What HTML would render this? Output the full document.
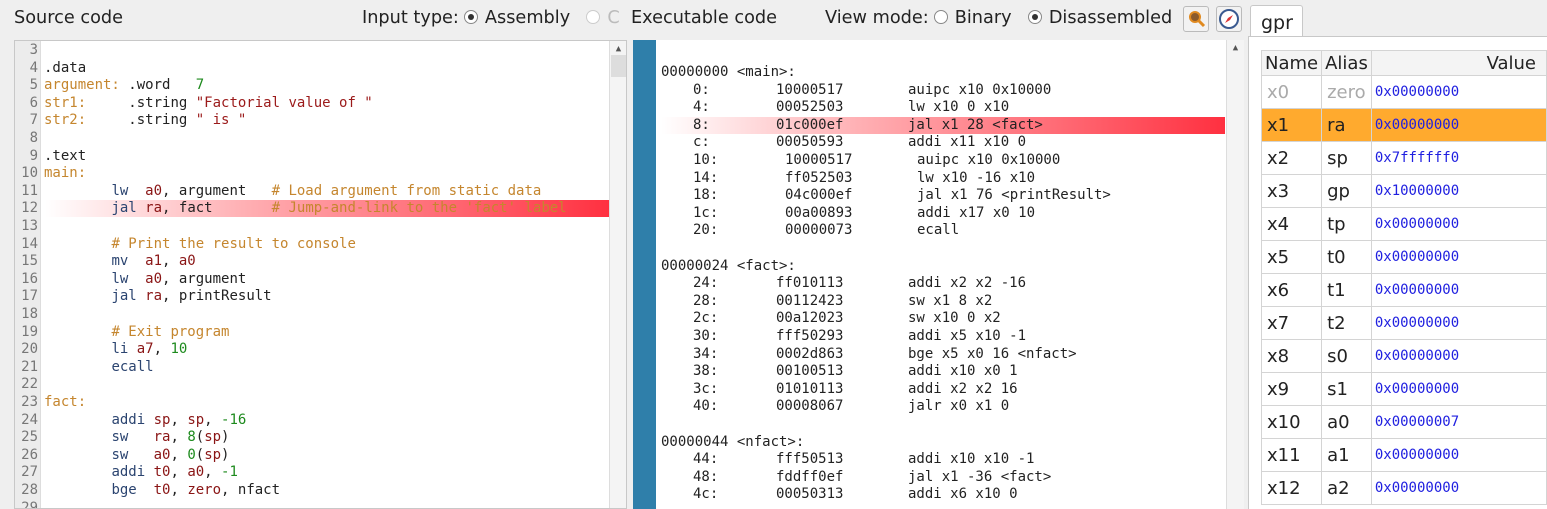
<!DOCTYPE html>
<html><head><meta charset="utf-8"><style>
*{margin:0;padding:0;box-sizing:border-box}
body{width:1547px;height:509px;overflow:hidden;background:#efefef;font-family:"DejaVu Sans","Liberation Sans",sans-serif;position:relative;color:#222}
.ui{position:absolute;font-size:17.7px;top:8px;white-space:nowrap}
.rad{display:inline-block;width:14px;height:14px;border:1px solid #888;border-radius:50%;background:#fff;vertical-align:-1px;position:relative;margin:0 7px 0 5px}
.rad.on::after{content:"";position:absolute;left:3px;top:3px;width:6px;height:6px;border-radius:50%;background:#333}
.mono{font-family:"DejaVu Sans Mono","Liberation Mono",monospace;font-size:14px}
#src{position:absolute;left:14px;top:40px;width:613px;height:469px;background:#fff;border:1px solid #c8c8c8;overflow:hidden}
#gut{position:absolute;left:0;top:0;width:26px;height:100%;background:#ececec;border-right:1px solid #ddd}
.ln{position:absolute;height:17.6px;line-height:17.6px;white-space:pre}
.num{left:0;width:23px;text-align:right;color:#777}
.code{left:29px}
.sb{position:absolute;background:#f4f4f4;border-left:1px solid #ddd}
.hl{position:absolute;height:17px;background:linear-gradient(90deg,rgba(255,255,255,0),#ffb0b4 35%,#ff3040)}
.m{color:#2b4470}.r{color:#8a1515}.n{color:#1d8a1d}.l{color:#c5862e}.s{color:#9b1a1a}
#dis{position:absolute;left:656px;top:40px;width:588px;height:469px;background:#fff;overflow:hidden}
#gpr{position:absolute;left:1248px;top:36px;width:299px;height:473px;background:#fff;border-left:1px solid #c8c8c8;border-top:1px solid #c8c8c8}
table{position:absolute;left:12px;top:13px;border-collapse:collapse;font-size:18px;table-layout:fixed}
td{border:1px solid #d4d4d4;height:33px;padding:0 5px;white-space:nowrap;overflow:hidden}
th{font-weight:normal;text-align:left;padding:0 3px;height:25px;border:1px solid #d4d4d4;background:#f4f4f4;white-space:nowrap;overflow:hidden}
td.v{font-family:"DejaVu Sans Mono",monospace;font-size:14px;color:#2020e0;padding-left:3px}
</style></head><body>
<div class="ui" style="left:14px">Source code</div>
<div class="ui" style="left:362px">Input type:<span class="rad on"></span>Assembly &nbsp;<span class="rad" style="border-color:#ccc"></span><span style="color:#bbb">C</span> &nbsp;Executable code</div>
<div class="ui" style="left:825px">View mode:<span class="rad"></span>Binary &nbsp;<span class="rad on"></span>Disassembled</div>
<div style="position:absolute;left:1183px;top:6px;width:26px;height:26px;border:1px solid #bbb;border-radius:3px;background:#f2f2f2"><svg width="24" height="24"><circle cx="11" cy="10" r="5" fill="#8b5a2b" stroke="#e08a20" stroke-width="2"/><line x1="15" y1="14" x2="20" y2="19" stroke="#e08a20" stroke-width="3"/></svg></div>
<div style="position:absolute;left:1216px;top:6px;width:26px;height:26px;border:1px solid #bbb;border-radius:3px;background:#f2f2f2"><svg width="24" height="24"><circle cx="12" cy="12" r="9" fill="#fff" stroke="#3a5a90" stroke-width="2"/><path d="M16 8 L13 13 L8 16 L11 11Z" fill="#d33"/></svg></div>
<div style="position:absolute;left:1250px;top:5px;width:53px;height:33px;background:#fff;border:1px solid #c8c8c8;border-bottom:none;border-radius:3px 3px 0 0;font-size:19px;padding:6px 0 0 10px">gpr</div>

<div id="src" class="mono">
<div id="gut"></div>
<div class="hl" style="left:30px;top:159px;width:565px"></div>
<div class="sb" style="left:594px;top:0;width:18px;height:469px"><div style="text-align:center;font-size:9px;color:#555;margin-top:3px">▲</div><div style="position:absolute;left:1px;top:14px;width:15px;height:22px;background:#ddd"></div></div>
<div id="lines"></div>
</div>
<div style="position:absolute;left:633px;top:40px;width:23px;height:469px;background:#2f7faa"></div>

<div id="dis" class="mono">
<div class="hl" style="left:5px;top:77px;width:564px"></div>
<div class="sb" style="left:570px;top:0;width:18px;height:469px"><div style="text-align:center;font-size:9px;color:#555;margin-top:3px">▲</div></div>
<div id="dl"></div>
</div>

<div id="gpr">
<table>
<colgroup><col style="width:57px"><col style="width:46px"><col style="width:192px"></colgroup>
<tr><th>Name</th><th>Alias</th><th style="text-align:right;padding-right:10px">Value</th></tr>
<tr style="color:#aaa"><td>x0</td><td>zero</td><td class="v">0x00000000</td></tr>
<tr style="background:#ffaa2e"><td>x1</td><td>ra</td><td class="v">0x00000000</td></tr>
<tr><td>x2</td><td>sp</td><td class="v">0x7ffffff0</td></tr>
<tr><td>x3</td><td>gp</td><td class="v">0x10000000</td></tr>
<tr><td>x4</td><td>tp</td><td class="v">0x00000000</td></tr>
<tr><td>x5</td><td>t0</td><td class="v">0x00000000</td></tr>
<tr><td>x6</td><td>t1</td><td class="v">0x00000000</td></tr>
<tr><td>x7</td><td>t2</td><td class="v">0x00000000</td></tr>
<tr><td>x8</td><td>s0</td><td class="v">0x00000000</td></tr>
<tr><td>x9</td><td>s1</td><td class="v">0x00000000</td></tr>
<tr><td>x10</td><td>a0</td><td class="v">0x00000007</td></tr>
<tr><td>x11</td><td>a1</td><td class="v">0x00000000</td></tr>
<tr><td>x12</td><td>a2</td><td class="v">0x00000000</td></tr>
</table>
</div>

<script>
var S=[
"",
".data",
"<span class=l>argument:</span> .word   <span class=n>7</span>",
"<span class=l>str1:</span>     .string <span class=s>\"Factorial value of \"</span>",
"<span class=l>str2:</span>     .string <span class=s>\" is \"</span>",
"",
".text",
"<span class=l>main:</span>",
"        <span class=m>lw</span>  <span class=r>a0</span>, argument   <span class=l># Load argument from static data</span>",
"        <span class=m>jal</span> <span class=r>ra</span>, fact       <span class=l># Jump-and-link to the 'fact' label</span>",
"",
"        <span class=l># Print the result to console</span>",
"        <span class=m>mv</span>  <span class=r>a1</span>, <span class=r>a0</span>",
"        <span class=m>lw</span>  <span class=r>a0</span>, argument",
"        <span class=m>jal</span> <span class=r>ra</span>, printResult",
"",
"        <span class=l># Exit program</span>",
"        <span class=m>li</span> <span class=r>a7</span>, <span class=n>10</span>",
"        <span class=m>ecall</span>",
"",
"<span class=l>fact:</span>",
"        <span class=m>addi</span> <span class=r>sp</span>, <span class=r>sp</span>, <span class=n>-16</span>",
"        <span class=m>sw</span>   <span class=r>ra</span>, <span class=n>8</span>(<span class=r>sp</span>)",
"        <span class=m>sw</span>   <span class=r>a0</span>, <span class=n>0</span>(<span class=r>sp</span>)",
"        <span class=m>addi</span> <span class=r>t0</span>, <span class=r>a0</span>, <span class=n>-1</span>",
"        <span class=m>bge</span>  <span class=r>t0</span>, <span class=r>zero</span>, nfact",
""];
var h="";
for(var i=0;i<S.length;i++){var t=1+i*17.6;h+='<div class="ln num" style="top:'+t+'px">'+(i+3)+'</div><div class="ln code" style="top:'+t+'px">'+S[i]+'</div>';}
document.getElementById("lines").innerHTML=h;
var D=[
["00000000 <main>:"],
["0:","10000517","auipc x10 0x10000"],
["4:","00052503","lw x10 0 x10"],
["8:","01c000ef","jal x1 28 <fact>"],
["c:","00050593","addi x11 x10 0"],
["10:","10000517","auipc x10 0x10000"],
["14:","ff052503","lw x10 -16 x10"],
["18:","04c000ef","jal x1 76 <printResult>"],
["1c:","00a00893","addi x17 x0 10"],
["20:","00000073","ecall"],
[""],
["00000024 <fact>:"],
["24:","ff010113","addi x2 x2 -16"],
["28:","00112423","sw x1 8 x2"],
["2c:","00a12023","sw x10 0 x2"],
["30:","fff50293","addi x5 x10 -1"],
["34:","0002d863","bge x5 x0 16 <nfact>"],
["38:","00100513","addi x10 x0 1"],
["3c:","01010113","addi x2 x2 16"],
["40:","00008067","jalr x0 x1 0"],
[""],
["00000044 <nfact>:"],
["44:","fff50513","addi x10 x10 -1"],
["48:","fddff0ef","jal x1 -36 <fact>"],
["4c:","00050313","addi x6 x10 0"]];
h="";
for(var i=0;i<D.length;i++){var t=24+i*17.6,d=D[i];
if(d.length==1){h+='<div class="ln" style="left:5px;top:'+t+'px">'+d[0].replace(/</g,"&lt;")+'</div>';}
else{var o=(i>=5&&i<=9)?9:0;
h+='<div class="ln" style="left:37px;top:'+t+'px">'+d[0]+'</div><div class="ln" style="left:'+(120+o)+'px;top:'+t+'px">'+d[1]+'</div><div class="ln" style="left:'+(252+o)+'px;top:'+t+'px">'+d[2].replace(/</g,"&lt;")+'</div>';}}
document.getElementById("dl").innerHTML=h;
</script>
</body></html>
